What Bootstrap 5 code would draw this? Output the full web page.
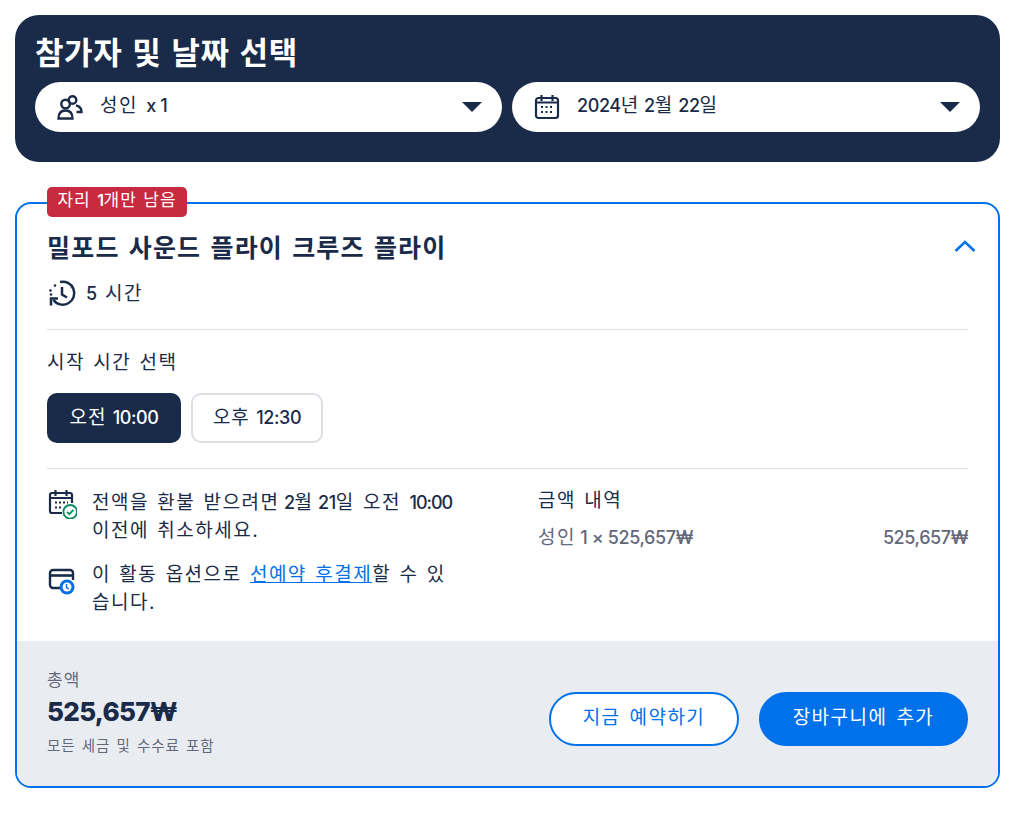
<!DOCTYPE html>
<html lang="ko">
<head>
    <meta charset="UTF-8">
    <meta name="viewport" content="width=device-width, initial-scale=1.0">
    <title>참가자 및 날짜 선택</title>
    <link href="https://cdn.jsdelivr.net/npm/bootstrap@5.3.0/dist/css/bootstrap.min.css" rel="stylesheet">
    <style>
        body {
            background-color: #fff;
            color: #1a2b49;
            font-family: "Inter", "Noto Sans CJK KR", sans-serif;
            font-size: 19px;
            letter-spacing: 1.5px;
            word-spacing: 1.5px;
        }
        /* latin digits sit smaller and tighter than the hangul around them */
        .num { font-size: 18px; font-weight: 500; letter-spacing: -0.4px; word-spacing: 0; }
        .num-time { letter-spacing: -1px; }
        .page-wrap { padding: 15px 12px 0 15px; }
        .picker-panel {
            background-color: #1a2b49;
            border-radius: 24px;
            padding: 18px 20px 30px;
            height: 147px;
        }
        .picker-title {
            color: #fff;
            font-size: 31px;
            font-weight: 700;
            line-height: 40px;
            letter-spacing: 0.6px;
            word-spacing: 2px;
            margin: 0 0 9px;
        }
        .picker-row { gap: 10px; }
        .picker-pill {
            background: #fff;
            border-radius: 25px;
            height: 50px;
            flex: 1 1 0;
            padding: 0 20px 0 22px;
            color: #1a2b49;
        }
        .picker-pill:first-child { flex: 0 0 467px; }
        .picker-label { margin-left: 17px; line-height: 48px; padding-bottom: 2px; }
        .caret-down {
            width: 0; height: 0;
            border-left: 10px solid transparent;
            border-right: 10px solid transparent;
            border-top: 10px solid #1a2b49;
        }
        .offer-box {
            position: relative;
            border: 2px solid #0071eb;
            border-radius: 16px;
            margin-top: 40px;
            height: 586px;
            display: flex;
            flex-direction: column;
        }
        .seat-tag {
            position: absolute;
            top: -17px;
            left: 30px;
            width: 140px;
            height: 30px;
            background: #c82a40;
            color: #fff;
            border-radius: 5px;
            font-size: 17px;
            line-height: 27px;
            letter-spacing: 0.9px;
            word-spacing: 1px;
            text-align: center;
        }
        .seat-tag .num { font-size: 16px; font-weight: 600; letter-spacing: -0.5px; }
        .offer-main { padding: 0 30px; flex: 1 1 auto; }
        .offer-title {
            font-size: 25px;
            font-weight: 700;
            line-height: 32px;
            letter-spacing: 1.2px;
            word-spacing: 2px;
            margin: 0;
            padding-top: 28px;
        }
        .chevron-up { margin: 24px -8px 0 0; }
        .duration-row { height: 36px; margin-top: 12px; gap: 9px; }
        .duration-icon { margin-top: -2px; }
        .rule-line { border-top: 1px solid #dcdfe4; margin: 0; opacity: 1; }
        .rule-top { margin-top: 17px; }
        .rule-mid { margin-top: 25px; }
        .start-label { margin: 19px 0 17px; line-height: 27px; }
        .time-row { gap: 10px; }
        .time-btn {
            height: 50px;
            border-radius: 10px;
            font-size: 19px;
            letter-spacing: 1px;
            color: #1a2b49;
            border: 2px solid #dcdfe4;
            background: #fff;
            padding: 0;
        }
        .time-btn.is-picked { background: #1a2b49; border-color: #1a2b49; color: #fff; width: 134px; }
        .time-btn.is-other { width: 132px; }
        .info-wrap { padding-top: 18px; }
        .info-col { width: 491px; }
        .info-icon { flex-shrink: 0; margin-right: 15px; }
        .info-icon-card { margin-top: 5px; }
        .info-second { margin-top: 14px; }
        .info-text { line-height: 28px; width: 368px; margin-top: 2px; }
        .info-text a { color: #0071eb; }
        .price-head { line-height: 28px; }
        .price-line { color: #63687a; line-height: 28px; margin-top: 9px; }
        .offer-foot {
            background: #e9edf1;
            height: 145px;
            border-radius: 0 0 14px 14px;
            padding: 0 30px;
        }
        .foot-total-col { margin-top: -4px; }
        .foot-small { color: #63687a; font-size: 17px; line-height: 24px; letter-spacing: 1.2px; }
        .foot-total { font-size: 26px; font-weight: 800; line-height: 39px; letter-spacing: -0.7px; }
        .foot-note { color: #63687a; font-size: 14.5px; line-height: 20px; margin-top: 5px; letter-spacing: 1px; word-spacing: 1px; }
        .foot-btns { gap: 20px; margin-top: 10px; }
        .book-btn {
            height: 54px;
            border-radius: 27px;
            font-size: 19px;
            letter-spacing: 1.5px;
            word-spacing: 2px;
            border: 2px solid #0071eb;
            padding: 0;
        }
        .book-now { width: 190px; color: #0071eb; background: #fff; }
        .book-cart { width: 209px; color: #fff; background: #0071eb; }
    </style>
</head>
<body>
<div class="page-wrap">
    <div class="picker-panel">
        <h1 class="picker-title">참가자 및 날짜 선택</h1>
        <div class="d-flex picker-row">
            <div class="picker-pill d-flex align-items-center">
                <svg width="26" height="26" viewBox="0 0 26 26" fill="none" stroke="#1a2b49" stroke-width="2.4">
                    <circle cx="15.500" cy="6" r="3.800"/>
                    <path d="M19 11.500c3 .5 5.500 2.500 5.500 6.500h-5"/>
                    <circle cx="8.600" cy="10" r="4.300"/>
                    <path d="M1.500 24.500c0-5.500 3-8 7-8s7 2.500 7 8z"/>
                </svg>
                <span class="picker-label">성인 <span class="num">x 1</span></span>
                <span class="caret-down ms-auto"></span>
            </div>
            <div class="picker-pill d-flex align-items-center">
                <svg width="26" height="26" viewBox="0 0 26 26" fill="none" stroke="#1a2b49" stroke-width="2.2">
                    <rect x="2" y="4" width="22" height="20" rx="2.500"/>
                    <path d="M7.500 1v6M18.500 1v6M2 8.500h22"/>
                    <path stroke-width="2" stroke-dasharray="2 2.500" d="M7 13h13M7 18h13"/>
                </svg>
                <span class="picker-label"><span class="num">2024</span>년<span class="num"> 2</span>월<span class="num"> 22</span>일</span>
                <span class="caret-down ms-auto"></span>
            </div>
        </div>
    </div>

    <div class="offer-box">
        <div class="seat-tag">자리 <span class="num">1</span>개만 남음</div>
        <div class="offer-main">
            <div class="d-flex justify-content-between align-items-center">
                <h2 class="offer-title">밀포드 사운드 플라이 크루즈 플라이</h2>
                <svg class="chevron-up" width="22" height="14" viewBox="0 0 22 14" fill="none" stroke="#0071eb" stroke-width="2.500"><path d="M1.500 12 11 3l9.500 9"/></svg>
            </div>
            <div class="duration-row d-flex align-items-center">
                <svg class="duration-icon" width="30" height="30" viewBox="0 0 30 30" fill="none" stroke="#1a2b49" stroke-width="2.500">
                    <path d="M13 4A11.500 11.500 0 1 1 6.500 22"/>
                    <path d="M15 9v7.500l5 3"/>
                    <path d="M4 27.500V20.500H11"/>
                    <circle cx="3.500" cy="12.500" r="1.300" fill="#1a2b49" stroke="none"/>
                    <circle cx="4" cy="16.500" r="1.300" fill="#1a2b49" stroke="none"/>
                    <circle cx="8" cy="7.500" r="1.300" fill="#1a2b49" stroke="none"/>
                </svg>
                <span><span class="num">5</span> 시간</span>
            </div>
            <hr class="rule-line rule-top">
            <div class="start-label">시작 시간 선택</div>
            <div class="d-flex time-row">
                <button class="btn time-btn is-picked">오전 <span class="num">10:00</span></button>
                <button class="btn time-btn is-other">오후 <span class="num">12:30</span></button>
            </div>
            <hr class="rule-line rule-mid">
            <div class="d-flex info-wrap">
                <div class="info-col">
                    <div class="d-flex">
                        <svg class="info-icon" width="30" height="32" viewBox="0 0 30 32" fill="none" stroke="#1a2b49" stroke-width="2.200">
                            <path d="M15 26H5a2 2 0 0 1-2-2V8a2 2 0 0 1 2-2h18a2 2 0 0 1 2 2v8"/>
                            <path d="M8.500 3v6M19.500 3v6M3 11h22"/>
                            <path stroke-width="2" stroke-dasharray="2 2" d="M8 15.500h13M8 20.500h8"/>
                            <circle cx="23.200" cy="24.800" r="6.800" stroke="#0a8a5a" stroke-width="1.800" fill="#fff"/>
                            <path d="m20 24.800 2.400 2.400 4-4.300" stroke="#0a8a5a" stroke-width="1.800"/>
                        </svg>
                        <div class="info-text">전액을 환불 받으려면<span class="num"> 2</span>월<span class="num"> 21</span>일 오전 <span class="num num-time">10:00</span> 이전에 취소하세요.</div>
                    </div>
                    <div class="d-flex info-second">
                        <svg class="info-icon info-icon-card" width="30" height="32" viewBox="0 0 30 32" fill="none" stroke="#1a2b49" stroke-width="2.400">
                            <path d="M13 24H6a3 3 0 0 1-3-3V9a3 3 0 0 1 3-3h17a3 3 0 0 1 3 3v7"/>
                            <path d="M3 11.500h23" stroke-width="2.600"/>
                            <circle cx="20" cy="23" r="7.500" fill="#0071eb" stroke="none"/>
                            <circle cx="20" cy="23" r="4.500" fill="#fff" stroke="none"/>
                            <path d="M19.500 20v3.500l2.300 1.500" stroke="#0071eb" stroke-width="1.400"/>
                        </svg>
                        <div class="info-text"><span>이 활동 옵션으로 </span><a href="#">선예약 후결제</a><span>할 수 있</span><span>습니다.</span></div>
                    </div>
                </div>
                <div class="flex-grow-1">
                    <div class="price-head">금액 내역</div>
                    <div class="price-line d-flex justify-content-between">
                        <span>성인<span class="num"> 1 × 525,657₩</span></span>
                        <span class="num">525,657₩</span>
                    </div>
                </div>
            </div>
        </div>
        <div class="offer-foot d-flex justify-content-between align-items-center">
            <div class="foot-total-col">
                <div class="foot-small">총액</div>
                <div class="foot-total">525,657₩</div>
                <div class="foot-note">모든 세금 및 수수료 포함</div>
            </div>
            <div class="d-flex foot-btns">
                <button class="btn book-btn book-now">지금 예약하기</button>
                <button class="btn book-btn book-cart">장바구니에 추가</button>
            </div>
        </div>
    </div>
</div>
<script src="https://cdn.jsdelivr.net/npm/bootstrap@5.3.0/dist/js/bootstrap.bundle.min.js"></script>
</body>
</html>
